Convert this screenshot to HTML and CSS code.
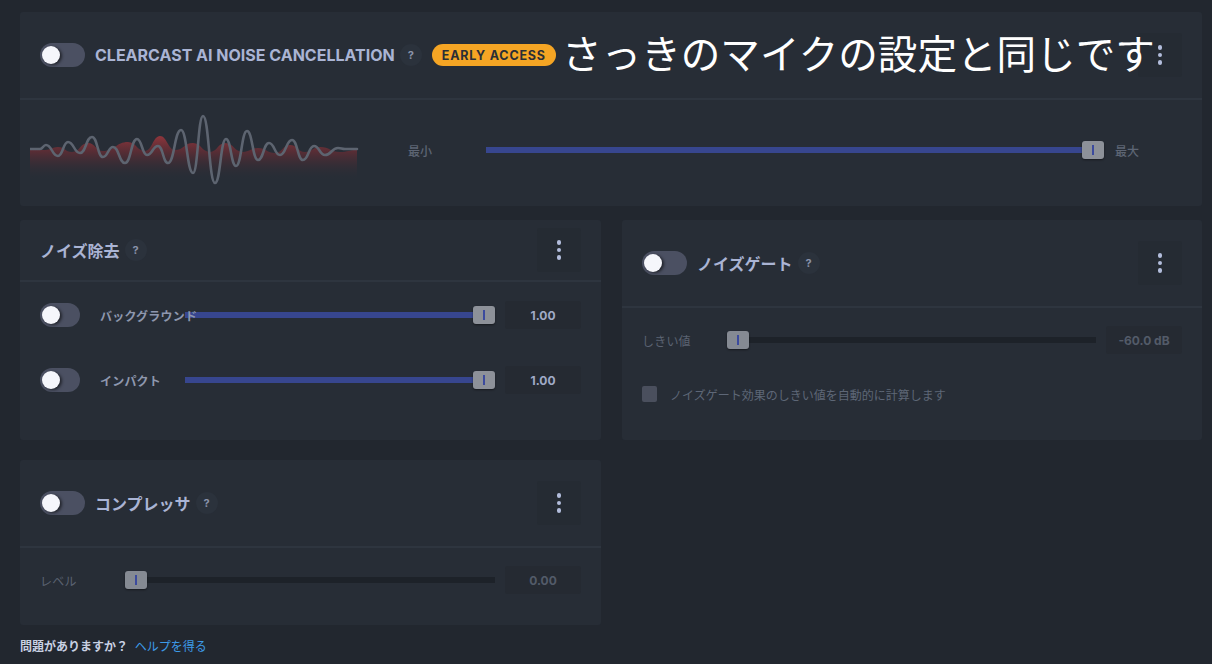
FILE: index.html
```html
<!DOCTYPE html>
<html lang="ja">
<head>
<meta charset="utf-8">
<title>Noise settings</title>
<link rel="stylesheet" href="styles.css">
</head>
<body>
<div class="page">
  <section class="panel top">
    <header class="ph ph-tall">
      <span class="toggle"><span class="knob"></span></span>
      <span class="title latin">CLEARCAST AI NOISE CANCELLATION</span>
      <span class="help">?</span>
      <span class="badge">EARLY ACCESS</span>
      <span class="spacer"></span>
      <span class="menu"><i></i><i></i><i></i></span>
    </header>
    <div class="top-body">
      <svg class="wave" width="330" height="80" viewBox="0 0 330 80">
        <defs>
          <linearGradient id="redfill" x1="0" y1="24" x2="0" y2="70" gradientUnits="userSpaceOnUse">
            <stop offset="0" stop-color="#a5373d" stop-opacity="0.9"/>
            <stop offset="0.4" stop-color="#742d34" stop-opacity="0.6"/>
            <stop offset="1" stop-color="#2a2d36" stop-opacity="0"/>
          </linearGradient>
        </defs>
        <path fill="url(#redfill)" d="M0 40 L15 40 C21 40 22 37 28 37 C35 37 35 42 42 42 C50 42 50 33 58 33 C65 33 66 41 73 41 C85 41 86 32 98 32 C106 32 107 41 115 41 C122 41 123 26 130 26 C137 26 138 40 145 40 C154 40 154 33 163 33 C171 33 172 42 180 42 C187 42 188 33 195 33 C204 33 204 42 213 42 C220 42 221 38 228 38 C236 38 237 43 245 43 C252 43 253 35 260 35 C267 35 268 42 275 42 C282 42 283 37 290 37 C300 37 300 42 310 42 C318 42 319 40 327 40 L327 70 L0 70 Z"/>
        <path fill="none" stroke="#5d6470" stroke-width="2.6" stroke-linecap="round" stroke-linejoin="round" d="M0 39 L10 39 C13 39 13 35 16 35 C22 35 22 46 28 46 C33 46 33 32 38 32 C44 32 44 43 50 43 C56 43 56 27 62 27 C67.5 27 67.5 47 73 47 C78 47 78 37 83 37 C89 37 89 53 95 53 C101 53 101 29 107 29 C112 29 112 45 117 45 C122.5 45 122.5 36 128 36 C133 36 133 53 138 53 C144.5 53 144.5 20 151 20 C157 20 157 63 163 63 C168 63 168 6 173 6 C179 6 179 73 185 73 C190.5 73 190.5 29 196 29 C201 29 201 56 206 56 C211.5 56 211.5 21 217 21 C222.5 21 222.5 50 228 50 C233.5 50 233.5 33 239 33 C244.5 33 244.5 45 250 45 C256 45 256 30 262 30 C267.5 30 267.5 50 273 50 C278.5 50 278.5 36 284 36 C289.5 36 289.5 45 295 45 C301.5 45 301.5 38 308 38 C311.5 38 311.5 39 315 39 L327 39"/>
      </svg>
      <div class="top-slider">
        <span class="minmax">最小</span>
        <div class="slider wide">
          <div class="track on"></div>
          <span class="thumb end"><b></b></span>
        </div>
        <span class="minmax max">最大</span>
      </div>
    </div>
    <div class="caption">さっきのマイクの設定と同じです</div>
  </section>

  <div class="cols">
    <div class="col left">
      <section class="panel">
        <header class="ph ph-short">
          <span class="title">ノイズ除去</span>
          <span class="help">?</span>
          <span class="spacer"></span>
          <span class="menu"><i></i><i></i><i></i></span>
        </header>
        <div class="body nr-body">
          <div class="row">
            <span class="toggle small"><span class="knob"></span></span>
            <span class="label">バックグラウンド</span>
            <div class="slider">
              <div class="track on"></div>
              <span class="thumb end"><b></b></span>
            </div>
            <span class="value">1.00</span>
          </div>
          <div class="row">
            <span class="toggle small"><span class="knob"></span></span>
            <span class="label">インパクト</span>
            <div class="slider">
              <div class="track on"></div>
              <span class="thumb end"><b></b></span>
            </div>
            <span class="value">1.00</span>
          </div>
        </div>
      </section>

      <section class="panel">
        <header class="ph ph-tall">
          <span class="toggle"><span class="knob"></span></span>
          <span class="title">コンプレッサ</span>
          <span class="help">?</span>
          <span class="spacer"></span>
          <span class="menu"><i></i><i></i><i></i></span>
        </header>
        <div class="body comp-body">
          <div class="row dim">
            <span class="label">レベル</span>
            <div class="slider">
              <div class="track off"></div>
              <span class="thumb start"><b></b></span>
            </div>
            <span class="value">0.00</span>
          </div>
        </div>
      </section>
    </div>

    <div class="col right">
      <section class="panel">
        <header class="ph ph-tall">
          <span class="toggle"><span class="knob"></span></span>
          <span class="title">ノイズゲート</span>
          <span class="help">?</span>
          <span class="spacer"></span>
          <span class="menu"><i></i><i></i><i></i></span>
        </header>
        <div class="body gate-body">
          <div class="row dim">
            <span class="label">しきい値</span>
            <div class="slider">
              <div class="track off"></div>
              <span class="thumb start"><b></b></span>
            </div>
            <span class="value">-60.0 dB</span>
          </div>
          <label class="check">
            <span class="box"></span>
            <span class="check-text">ノイズゲート効果のしきい値を自動的に計算します</span>
          </label>
        </div>
      </section>
    </div>
  </div>

  <footer class="foot">
    <span class="q">問題がありますか？</span>
    <a class="link">ヘルプを得る</a>
  </footer>
</div>
</body>
</html>
```

FILE: styles.css
```css
* { box-sizing: border-box; }

html, body {
  margin: 0;
  padding: 0;
}

body {
  width: 1212px;
  height: 664px;
  overflow: hidden;
  background: #22272f;
  font-family: Inter, "Noto Sans CJK JP", sans-serif;
  color: #aab4d4;
}

.page {
  padding: 12px 10px 0 20px;
}

.panel {
  position: relative;
  background: #272d36;
  border-radius: 3px;
}

.ph {
  display: flex;
  align-items: center;
  padding: 0 20px;
  border-bottom: 2px solid #2e353f;
}

.ph-tall { height: 88px; }
.ph-short { height: 62px; }

.spacer { flex: 1; }

/* toggles */
.toggle {
  position: relative;
  display: inline-block;
  width: 45px;
  height: 24px;
  border-radius: 12px;
  background: #4b5062;
  flex: none;
  margin-right: 10px;
}

.toggle.small {
  width: 40px;
  margin-right: 20px;
}

.knob {
  position: absolute;
  left: 2px;
  top: 3px;
  width: 18px;
  height: 18px;
  border-radius: 50%;
  background: #f5f6fb;
  box-shadow: 2px 1px 3px rgba(0, 0, 0, 0.55);
}

.title {
  font-family: "Noto Sans CJK JP", Inter, sans-serif;
  font-weight: 700;
  font-size: 16px;
  color: #aab4d4;
  white-space: nowrap;
}

.title.latin {
  font-family: Inter, "Noto Sans CJK JP", sans-serif;
  font-size: 16px;
  letter-spacing: 0;
}

.help {
  display: inline-flex;
  align-items: center;
  justify-content: center;
  width: 22px;
  height: 22px;
  border-radius: 50%;
  background: #2b323c;
  color: #8a93aa;
  font-family: Inter, sans-serif;
  font-size: 11px;
  font-weight: 700;
  margin-left: 5px;
  flex: none;
}

.badge {
  display: inline-flex;
  align-items: center;
  height: 22px;
  padding: 0 10px;
  margin-left: 10px;
  border-radius: 11px;
  background: #f5a524;
  color: #2a2e36;
  font-family: Inter, sans-serif;
  font-size: 12.5px;
  font-weight: 700;
  letter-spacing: 0.8px;
}

.menu {
  display: flex;
  flex-direction: column;
  align-items: center;
  justify-content: center;
  gap: 3px;
  width: 44px;
  height: 44px;
  border-radius: 3px;
  background: #252b33;
  flex: none;
}

.menu i {
  display: block;
  width: 4.5px;
  height: 4.5px;
  border-radius: 50%;
  background: #b3bddc;
}

/* top body */
.top-body {
  display: flex;
  align-items: center;
  height: 106px;
  padding: 10px 0 16px 10px;
}

.wave {
  display: block;
  flex: none;
}

.top-slider {
  display: flex;
  align-items: center;
  margin-left: 48px;
}

.minmax {
  font-family: "Noto Sans CJK JP", sans-serif;
  font-size: 12px;
  font-weight: 500;
  color: #5d6574;
}

.minmax.max {
  margin-left: 11px;
}

.slider {
  position: relative;
  flex: 1;
  height: 20px;
  display: flex;
  align-items: center;
}

.slider.wide {
  flex: none;
  width: 618px;
  margin-left: 54px;
}

.track {
  width: 100%;
  height: 6px;
}

.track.on { background: #37468f; }
.track.off { background: #1d2229; }

.thumb {
  position: absolute;
  top: 1px;
  width: 22px;
  height: 18px;
  border-radius: 3px;
  background: #8d9199;
  box-shadow: 0 1px 2px rgba(0, 0, 0, 0.45);
  display: flex;
  align-items: center;
  justify-content: center;
}

.thumb.end { right: 0; }
.thumb.start { left: 0; }

.thumb b {
  display: block;
  width: 2px;
  height: 10px;
  background: #3b4a9e;
}

/* panel bodies */
.cols {
  display: flex;
  align-items: flex-start;
  gap: 21px;
  margin-top: 14px;
}

.col {
  display: flex;
  flex-direction: column;
  gap: 20px;
}

.col.left { width: 581px; }
.col.right { width: 580px; }

.body {
  padding: 0 20px;
}

.nr-body {
  padding-top: 13px;
  padding-bottom: 40px;
  display: flex;
  flex-direction: column;
  gap: 25px;
}

.nr-body .row { height: 40px; }

.comp-body {
  padding-top: 18px;
  padding-bottom: 31px;
}

.gate-body {
  padding-top: 18px;
  padding-bottom: 38px;
}

.row {
  display: flex;
  align-items: center;
  height: 28px;
}

.label {
  position: relative;
  z-index: 1;
  width: 85px;
  flex: none;
  white-space: nowrap;
  font-family: "Noto Sans CJK JP", sans-serif;
  font-size: 12px;
  font-weight: 700;
  letter-spacing: 0.2px;
  color: #8e97ae;
}

.value {
  flex: none;
  width: 76px;
  height: 28px;
  margin-left: 10px;
  border-radius: 3px;
  background: #252a32;
  display: flex;
  align-items: center;
  justify-content: center;
  font-family: Inter, sans-serif;
  font-size: 12px;
  font-weight: 700;
  color: #a0aac8;
}

.row.dim .label {
  font-weight: 400;
  color: #5b6372;
}

.row.dim .value {
  color: #535b69;
}

.row.dim .thumb {
  background: #858a93;
}

.check {
  display: flex;
  align-items: center;
  margin-top: 32px;
  height: 16px;
}

.box {
  width: 15px;
  height: 16px;
  border-radius: 2px;
  background: #4a4f5d;
  flex: none;
}

.check-text {
  margin-left: 13px;
  font-family: "Noto Sans CJK JP", sans-serif;
  font-size: 12px;
  color: #5e6777;
}

/* caption overlay */
.caption {
  position: absolute;
  left: 542px;
  top: 20px;
  font-family: "Noto Sans CJK JP", sans-serif;
  font-size: 39.6px;
  line-height: 40px;
  font-weight: 400;
  color: #ffffff;
  white-space: nowrap;
}

/* footer */
.foot {
  margin-top: 14px;
  height: 14px;
  line-height: 14px;
  font-family: "Noto Sans CJK JP", sans-serif;
  font-size: 12px;
}

.foot .q {
  font-weight: 700;
  color: #c9d1e3;
}

.foot .link {
  margin-left: 4px;
  color: #3d9be9;
}
```
